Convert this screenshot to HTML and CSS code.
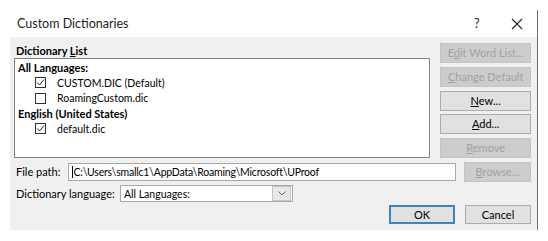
FILE: index.html
```html
<!DOCTYPE html>
<html lang="en">
<head>
    <meta charset="UTF-8">
    <title>Custom Dictionaries</title>
    <link rel="stylesheet" href="styles.css">
</head>
<body>
    <div class="window">
        <div class="titlebar">
            <span class="title">Custom Dictionaries</span>
            <span class="help">?</span>
            <span class="close">
                <svg width="12" height="12" viewBox="0 0 12 12"><path d="M1 1 L11 11 M11 1 L1 11" stroke="#222" stroke-width="1.1" fill="none"/></svg>
            </span>
        </div>

        <div class="client">
            <div class="top-row">
                <div class="list-col">
                    <div class="group-label">Dictionary <u>L</u>ist</div>
                    <div class="list-box">
                        <div class="list-head">All Languages:</div>
                        <div class="list-item">
                            <span class="check checked"><svg width="9" height="9" viewBox="0 0 9 9"><path d="M1 4.5 L3.5 7 L8 1.5" stroke="#222" stroke-width="1" fill="none"/></svg></span>
                            <span>CUSTOM.DIC (Default)</span>
                        </div>
                        <div class="list-item">
                            <span class="check"></span>
                            <span>RoamingCustom.dic</span>
                        </div>
                        <div class="list-head">English (United States)</div>
                        <div class="list-item">
                            <span class="check checked"><svg width="9" height="9" viewBox="0 0 9 9"><path d="M1 4.5 L3.5 7 L8 1.5" stroke="#222" stroke-width="1" fill="none"/></svg></span>
                            <span>default.dic</span>
                        </div>
                    </div>
                </div>
                <div class="button-col">
                    <div class="button disabled">E<u>d</u>it Word List...</div>
                    <div class="button disabled"><u>C</u>hange Default</div>
                    <div class="button"><u>N</u>ew...</div>
                    <div class="button"><u>A</u>dd...</div>
                    <div class="button disabled"><u>R</u>emove</div>
                </div>
            </div>

            <div class="path-row">
                <span class="label path-label">File path:</span>
                <div class="text-input"><span class="caret"></span>C:\Users\smallc1\AppData\Roaming\Microsoft\UProof</div>
                <div class="button disabled browse"><u>B</u>rowse...</div>
            </div>

            <div class="lang-row">
                <span class="label lang-label">Dictionary lan<u>g</u>uage:</span>
                <div class="select">
                    <span class="select-text">All Languages:</span>
                    <span class="select-arrow">
                        <svg width="8" height="5" viewBox="0 0 8 5"><path d="M0.5 0.5 L4 4 L7.5 0.5" stroke="#666" stroke-width="1" fill="none"/></svg>
                    </span>
                </div>
            </div>

            <div class="action-row">
                <div class="button default">OK</div>
                <div class="button">Cancel</div>
            </div>
        </div>
    </div>
</body>
</html>
```

FILE: styles.css
```css
* {
    box-sizing: border-box;
}
body {
    margin: 0;
    background-color: white;
    font-family: Lato, "Noto Sans", sans-serif;
    font-size: 10.5px;
    color: #000;
}
u {
    text-decoration: underline;
    text-underline-offset: 1px;
}
.window {
    margin: 10px 0 0 10px;
    width: 528px;
    height: 220px;
    border-right: 1px solid #6f6f6f;
}
.titlebar {
    height: 27px;
    display: flex;
    align-items: center;
    padding-left: 7px;
}
.title {
    flex: 1;
    font-size: 12.5px;
    color: #222;
}
.help {
    width: 12px;
    font-size: 12.5px;
    color: #222;
    margin-right: 25px;
}
.close {
    display: flex;
    margin-right: 14px;
}
.client {
    height: 193px;
    background-color: #f0f0f0;
    padding: 6px 6px 0 4px;
}
.top-row {
    display: flex;
    gap: 10px;
}
.list-col {
    width: 418px;
}
.group-label {
    height: 15px;
    line-height: 15px;
    padding-left: 2px;
    font-weight: bold;
    font-size: 11px;
}
.list-box {
    height: 100px;
    background-color: white;
    border: 1px solid #828282;
    padding: 1px 0 0 3px;
}
.list-head {
    height: 15px;
    line-height: 15px;
    font-weight: bold;
    font-size: 11px;
}
.list-item {
    height: 15.5px;
    display: flex;
    align-items: center;
    padding-left: 17px;
}
.check {
    width: 11px;
    height: 11px;
    border: 1px solid #333;
    margin-right: 11px;
    display: flex;
    align-items: center;
    justify-content: center;
    background-color: white;
}
.button-col {
    width: 91px;
    display: flex;
    flex-direction: column;
    gap: 3.75px;
}
.button {
    height: 20px;
    line-height: 18px;
    text-align: center;
    background-color: #e1e1e1;
    border: 1px solid #adadad;
    color: #000;
    white-space: nowrap;
    font-size: 11px;
}
.button.disabled {
    background-color: #cccccc;
    border-color: #c4c4c4;
    color: #a2a2a2;
}
.button.default {
    border: 2px solid #3c84c4;
    line-height: 16px;
}
.path-row {
    display: flex;
    align-items: center;
    margin-top: 4px;
    height: 19px;
}
.label {
    padding-left: 2px;
    white-space: nowrap;
    font-size: 11px;
}
.path-label {
    width: 54px;
}
.text-input {
    width: 389px;
    height: 18px;
    line-height: 16px;
    background-color: white;
    border: 1px solid #a8a8a8;
    padding-left: 3px;
    white-space: nowrap;
    overflow: hidden;
    letter-spacing: -0.2px;
}
.caret {
    display: inline-block;
    width: 1px;
    height: 12px;
    background-color: #000;
    vertical-align: -2px;
    margin-right: 0.5px;
}
.browse {
    width: 67px;
    margin-left: 8px;
}
.lang-row {
    display: flex;
    align-items: center;
    margin-top: 4px;
    height: 17px;
}
.lang-label {
    width: 106px;
}
.select {
    width: 173px;
    height: 17px;
    background-color: white;
    border: 1px solid #a8a8a8;
    display: flex;
    align-items: center;
    padding-right: 1px;
}
.select-text {
    flex: 1;
    padding-left: 3px;
}
.select-arrow {
    width: 19px;
    height: 15px;
    background-color: #e8e8e8;
    border: 1px solid #c4c4c4;
    display: flex;
    align-items: center;
    justify-content: center;
}
.action-row {
    display: flex;
    justify-content: flex-end;
    gap: 10px;
    margin-top: 3px;
}
.action-row .button {
    width: 66px;
    height: 19px;
}
```
